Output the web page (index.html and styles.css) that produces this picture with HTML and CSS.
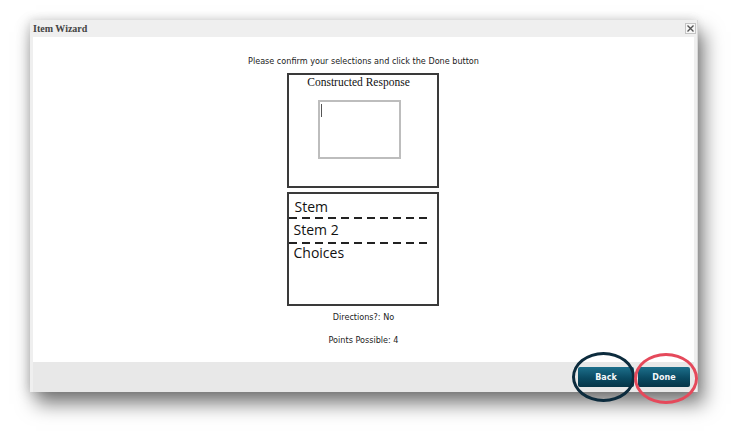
FILE: index.html
```html
<!DOCTYPE html>
<html lang="en">
<head>
    <meta charset="UTF-8">
    <meta name="viewport" content="width=device-width, initial-scale=1.0">
    <title>Item Wizard</title>
    <link rel="stylesheet" href="styles.css">
</head>
<body>

    <div class="dialog">
        <div class="title-bar">
            <span class="title">Item Wizard</span>
            <span class="close">
                <svg width="9" height="9" viewBox="0 0 9 9">
                    <path d="M1.5 1.5 L7.5 7.5 M7.5 1.5 L1.5 7.5" stroke="#555" stroke-width="1.4"/>
                </svg>
            </span>
        </div>

        <div class="content">
            <p class="intro">Please confirm your selections and click the Done button</p>

            <!-- Item type preview -->
            <div class="preview-box type-box">
                <div class="type-name">Constructed Response</div>
                <div class="answer-area"><span class="caret"></span></div>
            </div>

            <!-- Item layout preview -->
            <div class="preview-box layout-box">
                <div class="part first">Stem</div>
                <div class="dashes"></div>
                <div class="part">Stem 2</div>
                <div class="dashes"></div>
                <div class="part last">Choices</div>
            </div>

            <p class="summary">Directions?: No</p>
            <p class="summary">Points Possible: 4</p>
        </div>

        <div class="footer">
            <button class="btn btn-back">Back</button>
            <button class="btn btn-done">Done</button>
            <span class="ring ring-back"></span>
            <span class="ring ring-done"></span>
        </div>
    </div>

</body>
</html>
```

FILE: styles.css
```css
/* Page */
html, body {
    height: 100%;
}

body {
    margin: 0;
    background: #fff;
    font-family: "DejaVu Sans", Verdana, sans-serif;
    overflow: hidden;
}

/* Dialog window */
.dialog {
    width: 661px;
    margin: 20px 0 0 30px;
    padding: 0 3px;
    background: #efefef;
    border-right: 1px solid #d8d8d8;
    box-shadow: 6px 12px 18px rgba(0, 0, 0, 0.5), -3px 2px 12px rgba(0, 0, 0, 0.12), 0 -2px 8px rgba(0, 0, 0, 0.06);
}

/* Title bar */
.title-bar {
    height: 17px;
    display: flex;
    align-items: center;
    justify-content: space-between;
}

.title {
    font-family: "Liberation Serif", "DejaVu Serif", serif;
    font-weight: bold;
    font-size: 10px;
    color: #444;
}

.close {
    width: 9px;
    height: 9px;
    margin-right: -2px;
    border: 1px solid #c4c4c4;
    background: #f7f7f7;
    display: flex;
}

/* Content area */
.content {
    height: 325px;
    background: #fff;
    display: flex;
    flex-direction: column;
    align-items: center;
    box-sizing: border-box;
    padding-top: 19px;
}

.intro {
    margin: 0 0 7px;
    font-size: 8.1px;
    color: #222;
}

.preview-box {
    width: 148px;
    border: 2px solid #3a3a3a;
    margin-left: -2px;
}

.type-box {
    height: 111px;
}

.type-name {
    font-family: "Liberation Serif", serif;
    font-size: 11.5px;
    text-align: center;
    margin: 1px 8px 0 0;
    color: #111;
}

.answer-area {
    width: 79px;
    height: 55px;
    margin: 12px 0 0 29px;
    border: 2px solid #bdbdbd;
    position: relative;
}

.caret {
    position: absolute;
    left: 1px;
    top: 2px;
    width: 1px;
    height: 13px;
    background: #555;
}

.layout-box {
    height: 110px;
    margin-top: 4px;
}

.part {
    font-family: "Open Sans", "Noto Sans", sans-serif;
    font-size: 14px;
    line-height: 21px;
    padding: 0 0 2px 5px;
    color: #111;
}

.part.first {
    padding: 2px 0 0 6px;
}

.part.last {
    margin-top: -2px;
}

.dashes {
    height: 2px;
    width: 142px;
    background: repeating-linear-gradient(to right, #222 0 8px, transparent 8px 13px);
}

.summary {
    margin: 6px 0 7px;
    font-size: 8.1px;
    color: #222;
}

/* Footer with the wizard buttons */
.footer {
    height: 30px;
    background: #e8e8e8;
    display: flex;
    justify-content: flex-end;
    align-items: center;
    gap: 4px;
    padding-right: 4px;
    position: relative;
}

.btn {
    height: 20px;
    border: none;
    border-radius: 2px;
    padding: 0;
    color: #f4f8fa;
    font-family: "DejaVu Sans", Verdana, sans-serif;
    font-size: 8px;
    font-weight: 600;
    background: linear-gradient(#1d6f8b, #0a4a62 55%, #063547);
}

.btn-back {
    width: 56px;
}

.btn-done {
    width: 52px;
}

/* Highlight rings over the buttons */
.ring {
    position: absolute;
    border-radius: 50%;
    box-sizing: border-box;
}

.ring-back {
    left: 539px;
    top: -10px;
    width: 63px;
    height: 50px;
    border: 3.5px solid #0c2b3d;
}

.ring-done {
    left: 601px;
    top: -9px;
    width: 64px;
    height: 51px;
    border: 3.5px solid #e5495b;
}
```
